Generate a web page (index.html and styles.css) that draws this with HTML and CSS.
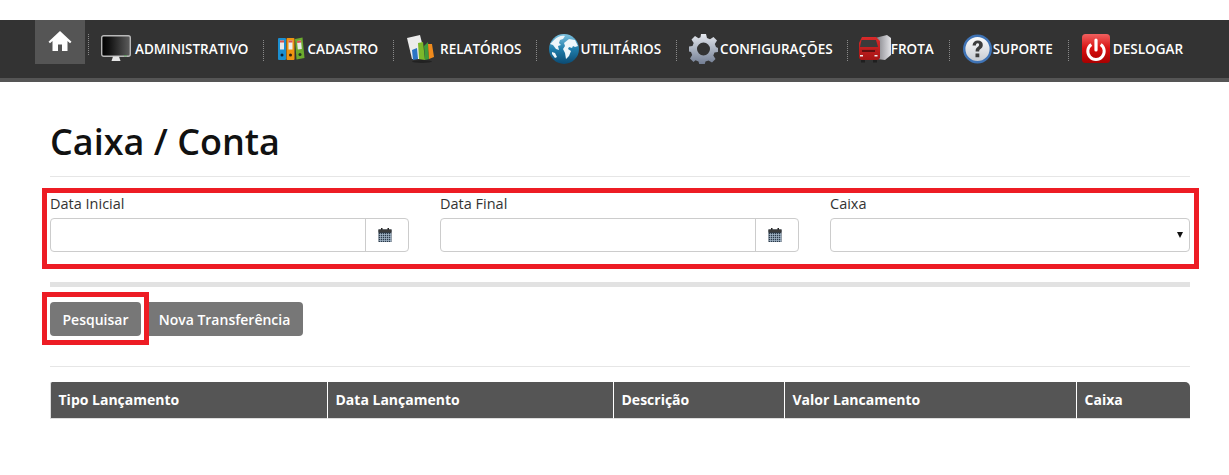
FILE: index.html
```html
<!DOCTYPE html>
<html lang="pt-BR">
<head>
<meta charset="utf-8">
<title>Caixa / Conta</title>
<link rel="stylesheet" href="styles.css">
</head>
<body>
<svg class="defs" width="0" height="0" aria-hidden="true">
  <defs>
    <linearGradient id="screen" x1="0" y1="0" x2="1" y2="0"><stop offset="0" stop-color="#000"/><stop offset=".25" stop-color="#111"/><stop offset="1" stop-color="#5e5e5e"/></linearGradient>
    <linearGradient id="globe" x1="0" y1="0" x2="0" y2="1"><stop offset="0" stop-color="#7fc3e0"/><stop offset=".5" stop-color="#1f7dab"/><stop offset="1" stop-color="#0b4a72"/></linearGradient>
    <linearGradient id="gear" x1="0" y1="0" x2="0" y2="1"><stop offset="0" stop-color="#e6e9ef"/><stop offset=".55" stop-color="#a3acbb"/><stop offset="1" stop-color="#6f7a90"/></linearGradient>
    <linearGradient id="power" x1="0" y1="0" x2="0" y2="1"><stop offset="0" stop-color="#f0605f"/><stop offset=".5" stop-color="#d81010"/><stop offset="1" stop-color="#a80000"/></linearGradient>
    <linearGradient id="help" x1="0" y1="0" x2="0" y2="1"><stop offset="0" stop-color="#ffffff"/><stop offset="1" stop-color="#c4c8cf"/></linearGradient>
    <linearGradient id="truck" x1="0" y1="0" x2="0" y2="1"><stop offset="0" stop-color="#d92a2a"/><stop offset="1" stop-color="#a51414"/></linearGradient>
    <linearGradient id="box" x1="0" y1="0" x2="1" y2="0"><stop offset="0" stop-color="#77777d"/><stop offset="1" stop-color="#e4e4e8"/></linearGradient>
    <symbol id="cal" viewBox="0 0 14 14"><rect x="0.500" y="1.500" width="13" height="12.500" fill="#2b3a4a"/><rect x="3" y="0" width="1.500" height="2" fill="#222"/><rect x="9.500" y="0" width="1.500" height="2" fill="#222"/><rect x="0.500" y="1.500" width="13" height="3" fill="#3a3a3a"/><path d="M.5 6.500h13M.5 8.500h13M.5 10.500h13M.5 12.500h13M2.500 5v9M4.500 5v9M6.500 5v9M8.500 5v9M10.500 5v9M12.500 5v9" stroke="#a9bccd" stroke-width=".7"/></symbol>
  </defs>
</svg>
<nav class="topbar">
  <a class="home" href="#" aria-label="Início">
    <svg viewBox="0 0 24 22" width="24" height="22"><path d="M12 1 0.500 11.800 2 13.200l2.500-2.300V21h5.500v-6.500h4V21h5.500V10.900l2.500 2.300 1.500-1.400z" fill="#fff"/></svg>
  </a>
  <span class="sep sep-first"></span>
  <a class="item" href="#">
    <svg class="ic" viewBox="0 0 34 28" width="34" height="28"><rect x="0.700" y="0.700" width="28.600" height="20.600" rx="2" fill="url(#screen)" stroke="#b9b9b9" stroke-width="1.400"/><path d="M12 21.500h6l1.500 4.500h-9z" fill="#e6e6e6"/><rect x="23" y="20.300" width="3" height="1" fill="#5aa05a"/></svg>
    ADMINISTRATIVO
  </a>
  <span class="sep"></span>
  <a class="item item-wide" href="#">
    <svg class="ic" viewBox="0 0 29 26" width="29" height="26"><rect x="0" y="2" width="8" height="22" rx="1" fill="#1c8fd0"/><rect x="8.500" y="2" width="8" height="22" rx="1" fill="#ef9410"/><path d="m17 3 7.500-1.500 2 20.500-8 1.500z" fill="#6cab2e"/><rect x="2" y="4.500" width="4" height="9" fill="#e8e8e8"/><rect x="2" y="4.500" width="4" height="2" fill="#d9534f"/><rect x="10.500" y="4.500" width="4" height="9" fill="#eee"/><rect x="10.500" y="4.500" width="4" height="2" fill="#d9534f"/><path d="m19 5 4-.6.8 8.600-4 .6z" fill="#e8e8e8"/><path d="m19 5 4-.6.200 2-4 .6z" fill="#d9534f"/><circle cx="4" cy="19" r="1.500" fill="#123"/><circle cx="12.500" cy="19" r="1.500" fill="#321"/><circle cx="22" cy="18.500" r="1.500" fill="#232"/></svg>
    CADASTRO
  </a>
  <span class="sep"></span>
  <a class="item item-chart" href="#">
    <svg class="ic" viewBox="0 0 33 28" width="33" height="28"><path d="M0 3 13 0l2 8-3 16H5z" fill="#ececec"/><path d="M5 15l5-2 1 11-5 1z" fill="#2a74c4"/><path d="M11 8l5-1 2 18-6-1z" fill="#7cb82a"/><path d="M17 11l4-4 1 17-4 1z" fill="#3f9a3a"/><path d="M21 9l4 0 2 13-5 2z" fill="#f08a1c"/><ellipse cx="15" cy="26.500" rx="10" ry="1.500" fill="#222"/></svg>
    RELATÓRIOS
  </a>
  <span class="sep"></span>
  <a class="item" href="#">
    <svg class="ic" viewBox="0 0 32 30" width="32" height="30"><circle cx="15" cy="15" r="15" fill="url(#globe)"/><path d="M5 6c3-3 7-5 11-4l-2 3-3 1-1 3 2 2-3 1 1 4-3-1-3-4-3-1zM15 9l5-4 6 1 3 6-3 1-2-1-1 2-3-1-1 2 3 2-2 5-3 3-1-6-2-4 2-3zM3 18l3 1 2 4-2 1-3-4z" fill="#eef6fa"/></svg>
    UTILITÁRIOS
  </a>
  <span class="sep"></span>
  <a class="item item-config" href="#">
    <svg class="ic" viewBox="0 0 31 30" width="31" height="30"><path fill-rule="evenodd" d="M12 0h5l1 4 3 1.200 3.500-2.200 3.500 3.500L25.800 10l1.200 3 2 1v4l-3.500.6-1.200 3 2.200 3.500-3.500 3.500-3.500-2.200-3 1.200-1 3.400h-5l-1-3.600-3-1.200L4.500 28 1 24.500l2.200-3.400L2 18l-2-.6v-4.800L3.500 12l1.200-3L2.500 5.500 6 2l3.500 2.200 2-1zM14.500 8.500a6.500 6.500 0 1 0 0 13 6.500 6.500 0 0 0 0-13z" fill="url(#gear)"/></svg>
    CONFIGURAÇÕES
  </a>
  <span class="sep"></span>
  <a class="item item-tight" href="#">
    <svg class="ic" viewBox="0 0 32 28" width="32" height="28"><path d="M16 3 28 0l4 3v17l-6 5-8-1z" fill="url(#box)"/><path d="M3 2h14l4 4v17l-2 2H2l-2-2V8z" fill="url(#truck)"/><path d="M2.500 5h14.500l2 7H1z" fill="#3a3a3a"/><path d="M1.500 14h17v4h-17z" fill="#b51c1c"/><path d="M3 15h13v2H3z" fill="#5c1010"/><rect x="1" y="20" width="3" height="1.500" fill="#eee"/><rect x="15.500" y="20" width="3" height="1.500" fill="#eee"/><rect x="2" y="25" width="4" height="2.500" fill="#1f1f1f"/><rect x="14" y="25" width="4" height="2.500" fill="#1f1f1f"/></svg>
    FROTA
  </a>
  <span class="sep"></span>
  <a class="item item-loose" href="#">
    <svg class="ic" viewBox="0 0 30 30" width="30" height="30"><circle cx="14.500" cy="15" r="13.300" fill="url(#help)" stroke="#3f73b5" stroke-width="2.400"/><path d="M9.500 11.500c.3-3.300 2.500-5 5.300-5 3 0 5 1.800 5 4.400 0 2-1 3-2.300 4-1 .8-1.300 1.300-1.300 2.600h-3.600c0-2.300.5-3.300 2-4.500 1-.8 1.500-1.300 1.500-2.200 0-1-.6-1.600-1.500-1.600-1 0-1.600.7-1.700 2.300zM12.500 19.500h3.800v3.800h-3.800z" fill="#3d3d3d"/></svg>
    SUPORTE
  </a>
  <span class="sep"></span>
  <a class="item item-loose" href="#">
    <svg class="ic" viewBox="0 0 31 30" width="31" height="30"><rect x="0" y="0" width="28" height="29" rx="3.500" fill="url(#power)"/><path d="M14 6v10" stroke="#fff" stroke-width="3.200" stroke-linecap="round"/><path d="M9.300 10.500a8.200 8.200 0 1 0 9.400 0" fill="none" stroke="#fff" stroke-width="3"/></svg>
    DESLOGAR
  </a>
</nav>

<main class="page">
  <h1 class="title">Caixa / Conta</h1>
  <hr class="rule">
  <form class="filters">
    <div class="field">
      <label class="label" for="ini">Data Inicial</label>
      <div class="group">
        <input class="input" id="ini" type="text">
        <span class="addon"><svg width="14" height="14"><use href="#cal"/></svg></span>
      </div>
    </div>
    <div class="field">
      <label class="label" for="fim">Data Final</label>
      <div class="group">
        <input class="input" id="fim" type="text">
        <span class="addon"><svg width="14" height="14"><use href="#cal"/></svg></span>
      </div>
    </div>
    <div class="field">
      <label class="label" for="caixa">Caixa</label>
      <div class="select-wrap">
        <select class="select" id="caixa"><option></option></select>
      </div>
    </div>
  </form>
  <div class="bar"></div>
  <div class="actions">
    <span class="marked"><button class="btn" type="button">Pesquisar</button></span>
    <button class="btn btn-next" type="button">Nova Transferência</button>
  </div>
  <hr class="rule rule-table">
  <table class="grid">
    <thead>
      <tr>
        <th class="c1">Tipo Lançamento</th>
        <th class="c2">Data Lançamento</th>
        <th class="c3">Descrição</th>
        <th class="c4">Valor Lancamento</th>
        <th class="c5">Caixa</th>
      </tr>
    </thead>
  </table>
</main>
</body>
</html>
```

FILE: styles.css
```css
* { box-sizing: border-box; }
html, body { margin: 0; padding: 0; background: #fff; }
body { font-family: "Open Sans", "Liberation Sans", sans-serif; color: #333; overflow: hidden; height: 475px; }
.defs { display: block; height: 0; }

.topbar {
  margin-top: 20px;
  height: 62px;
  background: #333;
  border-bottom: 4px solid #555;
  padding-left: 35px;
  display: flex;
  align-items: flex-start;
}
.home {
  width: 50px;
  height: 44px;
  background: #555;
  display: flex;
  align-items: center;
  justify-content: center;
  padding-bottom: 3px;
}
.sep {
  width: 1px;
  height: 21px;
  margin-top: 20px;
  border-left: 1px dotted #8a8a8a;
  flex: none;
}
.sep-first { margin: 14px 0 0 3px; }
.item {
  display: flex;
  align-items: center;
  height: 58px;
  padding: 0 15px 0 12px;
  color: #fff;
  text-decoration: none;
  font-size: 13.500px;
  font-weight: 600;
  white-space: nowrap;
}
.item-wide { padding-left: 14px; }
.item-chart { padding: 0 14px 0 13px; }
.item-config { padding-right: 14px; }
.item-tight { padding-left: 11px; }
.item-loose { padding-left: 13px; }
.ic { flex: none; display: block; }

.page { padding: 0 39px 0 50px; }
.title {
  margin: 0;
  padding-top: 35px;
  font-size: 36px;
  line-height: 50px;
  font-weight: 600;
  color: #111;
}
.rule { border: 0; border-top: 1px solid #e6e6e6; margin: 9px 0 0; }
.filters {
  margin: 11px -9px 0 -8px;
  height: 81px;
  border: 5px solid #ed1c24;
  padding: 2px 4px 0 3px;
  display: grid;
  grid-template-columns: 359px 359px 360px;
  column-gap: 31px;
}
.label { display: block; font-size: 14.500px; line-height: 18px; color: #333; margin-bottom: 5px; }
.group { display: flex; height: 34px; border: 1px solid #ccc; border-radius: 4px; }
.input { flex: 1; min-width: 0; border: 0; background: none; padding: 0 10px; outline: 0; }
.addon { width: 43px; border-left: 1px solid #ccc; display: flex; align-items: center; justify-content: center; padding-right: 5px; }
.select-wrap { position: relative; }
.select-wrap::after {
  content: "";
  position: absolute;
  right: 7px;
  top: 14px;
  border: 3.500px solid transparent;
  border-top: 6px solid #111;
  border-bottom: 0;
}
.select {
  display: block;
  width: 100%;
  height: 34px;
  border: 1px solid #ccc;
  border-radius: 4px;
  background: #fff;
  appearance: none;
  outline: 0;
}
.bar { height: 5px; background: #e2e2e2; margin-top: 13px; }
.actions { display: flex; margin-top: 5px; }
.marked {
  display: block;
  margin-left: -8px;
  border: 5px solid #ed1c24;
  padding: 5px 3px 4px 3px;
  height: 53px;
}
.btn {
  display: block;
  height: 34px;
  border: 0;
  border-radius: 4px;
  background: #777;
  color: #fff;
  font-family: inherit;
  font-size: 14px;
  font-weight: 600;
  padding: 0;
  width: 91px;
}
.btn-next { width: 154px; margin-top: 10px; border-radius: 0 4px 4px 0; padding-right: 3px; }
.rule-table { margin-top: 21px; }
.grid {
  margin-top: 15px;
  width: 1140px;
  border-collapse: separate;
  border-spacing: 0;
  table-layout: fixed;
}
.grid th {
  height: 37px;
  background: #555;
  color: #fff;
  font-size: 14px;
  font-weight: 700;
  text-align: left;
  padding: 0 7px 2px 7.500px;
  border-left: 1px solid #fff;
  border-bottom: 1px solid #ddd;
}
.grid th.c1 { border-left: 1px solid #ddd; border-top-left-radius: 2px; width: 277px; }
.grid th.c2 { width: 286px; }
.grid th.c3 { width: 171px; }
.grid th.c4 { width: 292px; }
.grid th.c5 { width: 114px; border-top-right-radius: 5px; }
```
